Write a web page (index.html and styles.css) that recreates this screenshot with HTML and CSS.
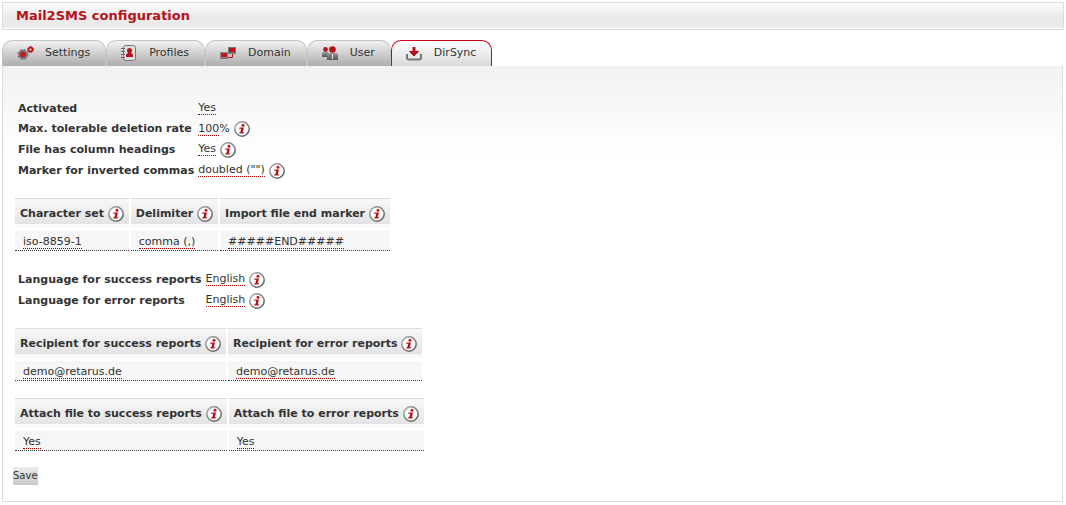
FILE: index.html
```html
<!DOCTYPE html>
<html lang="en">
<head>
<meta charset="utf-8">
<title>Mail2SMS configuration</title>
<link rel="stylesheet" href="styles.css">
</head>
<body>
<svg class="defs" aria-hidden="true">
  <defs>
    <linearGradient id="ring" x1="0" y1="0" x2="1" y2="1"><stop offset="0" stop-color="#aaa"/><stop offset="1" stop-color="#555"/></linearGradient>
    <linearGradient id="grey" x1="0" y1="0" x2="0" y2="1"><stop offset="0" stop-color="#999"/><stop offset="1" stop-color="#555"/></linearGradient>
    <symbol id="info" viewBox="0 0 16 16">
      <circle cx="8" cy="8" r="7.200" fill="#fff" stroke="url(#ring)" stroke-width="1.500"/>
      <circle cx="9" cy="4.200" r="1.500" fill="#c4161f"/>
      <path d="M5.500 6.400h4.500l-1.200 4.800h1.200l-.4 1.300H5.100l.4-1.300h.9l.8-3.500H5.100z" fill="#b5121b"/>
    </symbol>
  </defs>
</svg>
<header class="title-bar"><h1>Mail2SMS configuration</h1></header>
<nav class="tabs">
  <a class="tab" href="#settings">
    <svg class="tab-icon" viewBox="0 0 18 18"><circle cx="6" cy="10.500" r="4.700" fill="#777" stroke="#777" stroke-width="1.800" stroke-dasharray="2 1.700"/><circle cx="6" cy="10.500" r="2.800" fill="#c4161f"/><circle cx="13.500" cy="5.500" r="2" fill="#eee" stroke="#c4161f" stroke-width="1.800"/><circle cx="13.500" cy="5.500" r="3" fill="none" stroke="#c4161f" stroke-dasharray="1.200 1.200"/></svg>
    <span>Settings</span></a>
  <a class="tab" href="#profiles">
    <svg class="tab-icon" viewBox="0 0 18 18"><rect x="2.500" y="1.500" width="12" height="15" rx="2" fill="#ddd" stroke="#777"/><path d="M0 4.500h4M0 7.500h4M0 10.500h4M0 13.500h4" stroke="#666"/><path d="M5 13v-2q0-1.500 2.200-2 -1.200-1-1.200-2.500a2.500 2.500 0 0 1 5 0q0 1.500-1.200 2.500 2.200.5 2.200 2v2z" fill="#b5121b"/></svg>
    <span>Profiles</span></a>
  <a class="tab" href="#domain">
    <svg class="tab-icon" viewBox="0 0 18 18"><rect x="8.500" y="3.500" width="7" height="5" fill="#b5121b" stroke="#777"/><rect x=".5" y="8.500" width="7" height="5" fill="#c4161f" stroke="#888"/><path d="M8 9.500h8M0 14.500h8" stroke="#777"/><path d="M8 13.500h4.500V10" fill="none" stroke="#c4161f"/></svg>
    <span>Domain</span></a>
  <a class="tab" href="#user">
    <svg class="tab-icon" viewBox="0 0 18 18"><path d="M0 13V10Q0 8 2 8h4v5z" fill="url(#grey)"/><path d="M5 16v-5q0-2 2-2h6q3 0 3 2v5z" fill="url(#grey)"/><path d="M10.500 10v5" stroke="#ddd"/><circle cx="3.500" cy="5.500" r="2.400" fill="#b5121b"/><circle cx="10.500" cy="5.500" r="3.300" fill="#b5121b"/></svg>
    <span>User</span></a>
  <a class="tab active" href="#dirsync" aria-current="page">
    <svg class="tab-icon" viewBox="0 0 18 18"><path d="M1 10v3.500q0 2 2 2h10q2 0 2-2V10" fill="none" stroke="#777" stroke-width="2"/><path d="M8 3v7" stroke="#b5121b" stroke-width="3"/><path d="M3.500 7.500L8 12l4.500-4.500z" fill="#b5121b" stroke="#b5121b" stroke-linejoin="round"/></svg>
    <span>DirSync</span></a>
</nav>
<main class="panel">
  <dl class="fields">
    <dt class="plain">Activated</dt><dd><a class="edit" href="#activated">Yes</a></dd>
    <dt>Max. tolerable deletion rate</dt><dd><span><a class="edit" href="#rate">100</a>%</span><svg class="info"><use href="#info"/></svg></dd>
    <dt>File has column headings</dt><dd><a class="edit" href="#headings">Yes</a><svg class="info"><use href="#info"/></svg></dd>
    <dt>Marker for inverted commas</dt><dd><a class="edit" href="#marker">doubled ("")</a><svg class="info"><use href="#info"/></svg></dd>
  </dl>
  <table class="grid">
    <thead><tr><th>Character set <svg class="info"><use href="#info"/></svg></th><th>Delimiter <svg class="info"><use href="#info"/></svg></th><th>Import file end marker <svg class="info"><use href="#info"/></svg></th></tr></thead>
    <tbody><tr><td><a class="edit" href="#charset">iso-8859-1</a></td><td><a class="edit" href="#delimiter">comma (,)</a></td><td><a class="edit" href="#end">#####END#####</a></td></tr></tbody>
  </table>
  <dl class="fields languages">
    <dt>Language for success reports</dt><dd><a class="edit" href="#lang-success">English</a><svg class="info"><use href="#info"/></svg></dd>
    <dt>Language for error reports</dt><dd><a class="edit" href="#lang-error">English</a><svg class="info"><use href="#info"/></svg></dd>
  </dl>
  <table class="grid">
    <thead><tr><th>Recipient for success reports <svg class="info"><use href="#info"/></svg></th><th>Recipient for error reports <svg class="info"><use href="#info"/></svg></th></tr></thead>
    <tbody><tr><td><a class="edit" href="#to-success">demo@retarus.de</a></td><td><a class="edit" href="#to-error">demo@retarus.de</a></td></tr></tbody>
  </table>
  <table class="grid">
    <thead><tr><th>Attach file to success reports <svg class="info"><use href="#info"/></svg></th><th>Attach file to error reports <svg class="info"><use href="#info"/></svg></th></tr></thead>
    <tbody><tr><td><a class="edit" href="#att-success">Yes</a></td><td><a class="edit" href="#att-error">Yes</a></td></tr></tbody>
  </table>
  <button class="save" type="button">Save</button>
</main>
</body>
</html>
```
FILE: styles.css
```css
* { box-sizing: border-box; }
body {
  margin: 0;
  padding: 2px 2px 3px;
  background: #fff;
  color: #333;
  font: 11px/14px "DejaVu Sans", Verdana, sans-serif;
}
a { color: inherit; text-decoration: none; }
.defs { position: absolute; width: 0; height: 0; }
.title-bar {
  border: 1px solid #dcdcdc;
  padding-bottom: 1px;
}
.title-bar h1 {
  margin: 0;
  padding: 5px 13px 4px;
  background: linear-gradient(#fdfdfd, #e9e9ea 60%, #ececed);
  color: #b5121b;
  font-size: 13px;
  line-height: 16px;
}
.tabs { display: flex; margin-top: 10px; }
.tab {
  display: flex;
  height: 26px;
  padding: 0 15px 0 14px;
  gap: 10px;
  border: 1px solid #c4c4c4;
  border-bottom: 0;
  border-radius: 10px 10px 0 0;
  background: linear-gradient(#f2f2f2, #adadad);
  line-height: 23px;
}
.tab.active {
  border-color: #d0021b;
  background: linear-gradient(#fff, #dadada);
}
.tab-icon { width: 18px; height: 18px; margin-top: 3px; }
.panel {
  margin-right: 1px;
  padding: 33px 10px 16px;
  border: 1px solid #dcdcdc;
  border-top: 0;
  background: linear-gradient(#f2f2f3, #fff 90px);
}
.fields {
  display: grid;
  grid-template-columns: max-content 1fr;
  column-gap: 4px;
  margin: 0 5px;
  line-height: 21px;
}
.fields dt { font-weight: bold; }
.fields .plain { line-height: 19px; }
.fields dd {
  display: flex;
  align-items: center;
  gap: 4px;
  margin: 0;
  line-height: 14px;
}
.edit { border-bottom: 1px dotted #a00000; line-height: 12px; }
.info { width: 16px; height: 16px; flex: none; vertical-align: middle; }
.grid {
  margin: 17px 0 0;
  border-spacing: 2px 0;
}
.grid th {
  height: 30px;
  padding: 4px 5px 0;
  border-top: 1px solid #dcdcdc;
  border-bottom: 4px solid #fafafa;
  background: linear-gradient(#f8f8f8, #e3e3e5);
  text-align: left;
}
.grid td {
  height: 23px;
  padding: 5px 8px 0;
  border-bottom: 1px dotted #333;
  background: linear-gradient(#fff 3px, #f6f6f6 3px);
}
.languages { margin-top: 18px; }
.save {
  display: block;
  height: 18px;
  margin-top: 16px;
  padding: 0;
  border: 0;
  background: linear-gradient(#ebebeb, #cacaca);
  color: #333;
  font: 10px/18px "DejaVu Sans", Verdana, sans-serif;
}
```
